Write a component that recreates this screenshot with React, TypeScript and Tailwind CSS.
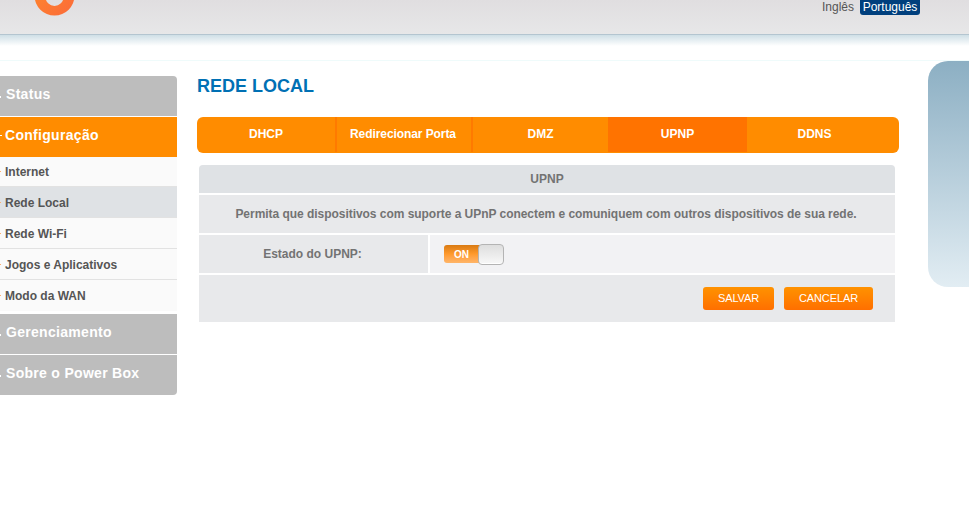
import React from 'react'

const font = { fontFamily: '"Liberation Sans", Arial, sans-serif' }

const subItems = ['Internet', 'Rede Local', 'Rede Wi-Fi', 'Jogos e Aplicativos', 'Modo da WAN']

const tabs = [
  { label: 'DHCP', className: 'w-[138px]' },
  { label: 'Redirecionar Porta', className: 'w-[134px] pr-[2px] tracking-[-0.08px]' },
  { label: 'DMZ', className: 'w-[135px]' },
  { label: 'UPNP', className: 'w-[139px] bg-[#ff7300]' },
  { label: 'DDNS', className: 'w-[135px]' },
]

const MenuHead = ({ label, className, mark = 'dot' }: { label: string; className: string; mark?: string }) => (
  <div className={`flex h-10 items-center pb-1 text-[14px] font-bold tracking-[0.3px] text-white ${className}`}>
    <span className={mark === 'dash' ? 'mt-px h-px w-[2px] bg-white' : 'mt-[5px] h-[2px] w-px bg-white'} />
    <span className={mark === 'dash' ? 'ml-[3px]' : 'ml-[5px]'}>{label}</span>
  </div>
)

const Sidebar = () => (
  <aside className="mt-[15px] flex w-[177px] shrink-0 flex-col">
    <MenuHead label="Status" className="mb-px rounded-tr-[4px] bg-[#bdbdbd]" />
    <MenuHead label="Configuração" className="bg-[#ff8c00]" mark="dash" />
    <ul className="mb-[3px] flex flex-col">
      {subItems.map((item, i) => (
        <li
          key={item}
          className={`flex items-center text-[12px] font-bold text-[#555] ${i === 0 ? 'h-[30px]' : 'h-[31px]'} ${
            i === 1 ? 'bg-[#dfe2e5]' : 'bg-[#fafafa]'
          } ${i < 4 ? 'border-b border-[#e2e2e2]' : ''} ${i > 0 && i < 4 ? 'pt-px' : ''}`}
        >
          <span className="h-px w-px bg-[#ffb070]" />
          <span className="ml-1">{item}</span>
        </li>
      ))}
    </ul>
    <MenuHead label="Gerenciamento" className="mb-px bg-[#bdbdbd]" />
    <MenuHead label="Sobre o Power Box" className="rounded-br-[4px] bg-[#bdbdbd]" />
  </aside>
)

const Toggle = () => (
  <div className="flex h-[21px] w-[60px] items-center">
    <div className="flex h-[18px] w-[36px] items-center rounded-l-[3px] bg-gradient-to-b from-[#d97a12] via-[#ff9a2c] to-[#ffb568] pl-[10px] text-[10px] font-bold text-white">
      ON
    </div>
    <div className="-ml-[2px] h-[21px] w-[26px] rounded-[4px] border border-[#b4b4b4] bg-gradient-to-b from-[#dedede] to-[#f8f8f8] shadow-[inset_0_-1px_0_#fff]" />
  </div>
)

const ActionButton = ({ label, className }: { label: string; className: string }) => (
  <button
    className={`flex h-[23px] items-center justify-center rounded-[3px] bg-gradient-to-b from-[#ff9200] to-[#ff6f00] text-[11px] tracking-[-0.1px] text-white ${className}`}
  >
    {label}
  </button>
)

export default function App() {
  return (
    <div className="h-[531px] w-[969px] overflow-hidden bg-white" style={font}>
      <header className="flex h-[34px] items-start justify-between bg-gradient-to-b from-[#e0dee0] to-[#e7e7e8] pl-[35px] pr-[49px]">
        <svg width="39" height="16" viewBox="0 0 39 16">
          <defs>
            <linearGradient id="ring" x1="0" y1="0" x2="1" y2="1">
              <stop offset="0" stopColor="#ff8a2a" />
              <stop offset="1" stopColor="#fb6a3a" />
            </linearGradient>
          </defs>
          <path
            fillRule="evenodd"
            fill="url(#ring)"
            d="M-0.5 -4.5a20 20 0 1 0 40 0a20 20 0 1 0 -40 0zM10.5 -3a9 9 0 1 0 18 0a9 9 0 1 0 -18 0z"
          />
        </svg>
        <div className="flex items-start text-[12px] leading-[14px]">
          <span className="mr-[6px] text-[#555]">Inglês</span>
          <span className="flex h-[15px] w-[60px] justify-center rounded-b-[3px] bg-[#003f7d] text-white">Português</span>
        </div>
      </header>
      <div className="h-[12px] border-t border-[#b4c5d0] bg-gradient-to-b from-[#cfdfe6] to-white" />
      <div className="h-[15px] border-b border-[#effbfb] bg-white" />
      <div className="flex">
        <Sidebar />
        <main className="ml-5 mt-[15px] w-[702px] shrink-0">
          <h1 className="h-[41px] text-[18px] leading-[20px] font-bold text-[#0070b4]">REDE LOCAL</h1>
          <nav className="flex h-9 overflow-hidden rounded-[6px] bg-[#ff8c00] text-[12px] font-bold text-white">
            {tabs.map((tab, i) => (
              <React.Fragment key={tab.label}>
                <div className={`mb-px flex items-center justify-center pb-[2px] ${tab.className}`}>{tab.label}</div>
                {i < 2 && <div className="mb-px w-[2px] bg-[#ff7a00]" />}
              </React.Fragment>
            ))}
          </nav>
          <section className="ml-[2px] mt-3 flex w-[696px] flex-col gap-[2px] text-[12px] font-bold text-[#737373]">
            <div className="flex h-7 items-center justify-center rounded-t-[4px] bg-[#dfe2e5]">UPNP</div>
            <div className="flex h-[38px] items-center justify-center bg-[#e8e9eb] pr-[2px] tracking-[-0.04px]">
              Permita que dispositivos com suporte a UPnP conectem e comuniquem com outros dispositivos de sua rede.
            </div>
            <div className="flex h-[38px] gap-[2px]">
              <div className="flex w-[229px] items-center justify-center bg-[#e8e9eb] pr-[2px]">Estado do UPNP:</div>
              <div className="flex flex-1 items-center bg-[#f2f2f4] pl-[14px]">
                <Toggle />
              </div>
            </div>
            <div className="flex h-[47px] items-center justify-end gap-[10px] bg-[#e8e9eb] pr-[22px] font-normal">
              <ActionButton label="SALVAR" className="w-[71px]" />
              <ActionButton label="CANCELAR" className="w-[89px]" />
            </div>
          </section>
        </main>
        <div className="ml-[29px] h-[226px] flex-1 rounded-l-[20px] bg-gradient-to-b from-[#8cafc3] to-[#e2edf3]" />
      </div>
    </div>
  )
}
